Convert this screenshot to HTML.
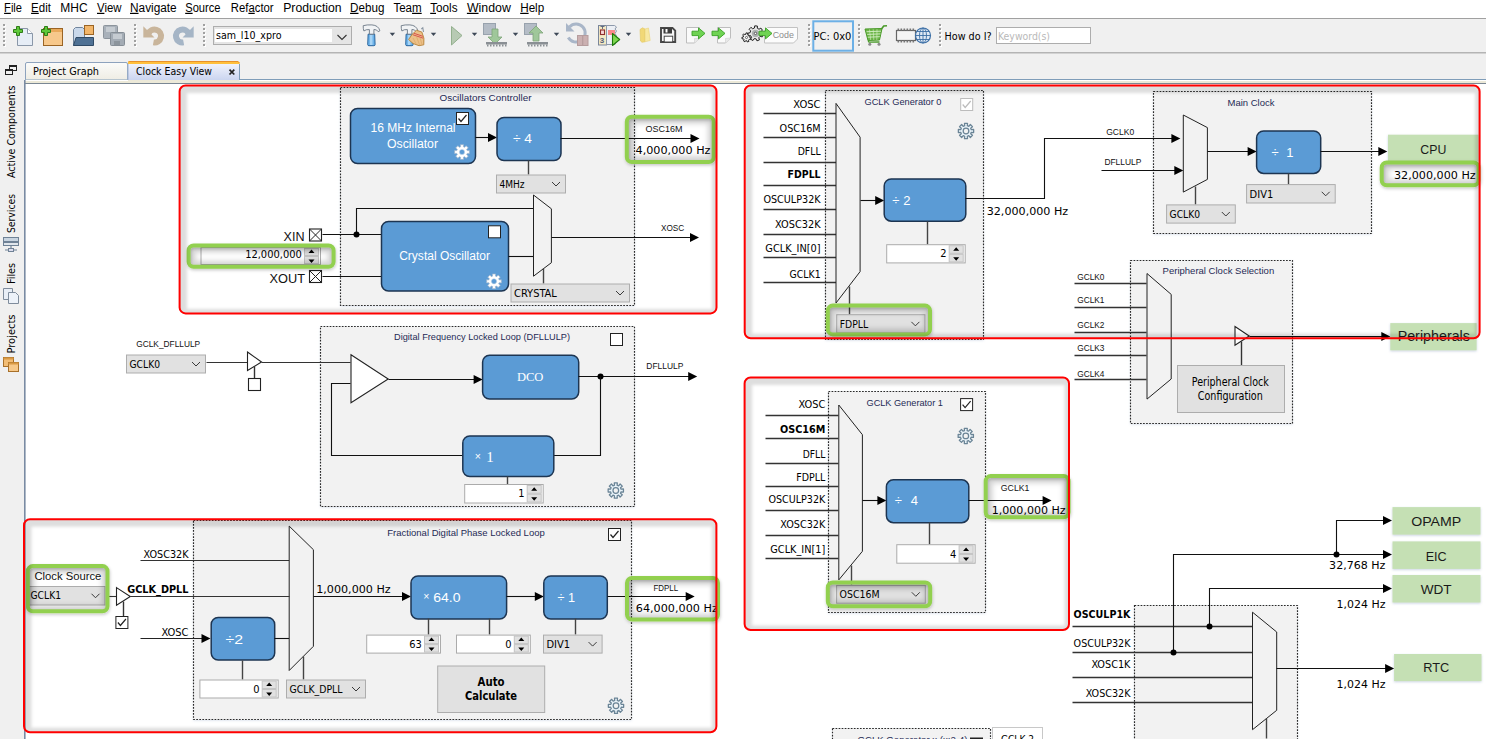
<!DOCTYPE html>
<html lang="en"><head><meta charset="utf-8"><title>Clock Easy View</title>
<style>
html,body{margin:0;padding:0;background:#fff;overflow:hidden}
svg{display:block}
text{white-space:pre}
</style></head>
<body>
<svg width="1486" height="739" viewBox="0 0 1486 739">
<defs>
<filter id="bs" x="-5%" y="-5%" width="110%" height="112%"><feDropShadow dx="0" dy="1" stdDeviation="1" flood-color="#6080b0" flood-opacity="0.25"/></filter>
<filter id="gs" x="-10%" y="-20%" width="120%" height="150%"><feDropShadow dx="0.5" dy="1.5" stdDeviation="1.6" flood-color="#000" flood-opacity="0.22"/></filter>
<filter id="ls" x="-5%" y="-10%" width="110%" height="130%"><feDropShadow dx="0" dy="1" stdDeviation="1" flood-color="#5070a0" flood-opacity="0.3"/></filter>
<filter id="gb" x="-10%" y="-20%" width="120%" height="140%"><feGaussianBlur stdDeviation="2.4"/></filter>
<filter id="rb" x="-5%" y="-5%" width="110%" height="110%"><feGaussianBlur stdDeviation="1.8"/></filter>
<linearGradient id="tabsel" x1="0" y1="0" x2="0" y2="1"><stop offset="0" stop-color="#f0f2fc"/><stop offset="1" stop-color="#cbd5f0"/></linearGradient>
<linearGradient id="tabun" x1="0" y1="0" x2="0" y2="1"><stop offset="0" stop-color="#fbfbfa"/><stop offset="1" stop-color="#efede4"/></linearGradient>
</defs>
<rect x="0" y="0" width="1486" height="739" fill="#fff"/>
<rect x="0" y="0" width="1486" height="18" fill="#fff"/>
<text x="4.1" y="11.8" font-size="12" font-family="'Liberation Sans',sans-serif" fill="#000" textLength="17.9" lengthAdjust="spacingAndGlyphs"><tspan text-decoration="underline">F</tspan>ile</text>
<text x="31.1" y="11.8" font-size="12" font-family="'Liberation Sans',sans-serif" fill="#000" textLength="19.8" lengthAdjust="spacingAndGlyphs"><tspan text-decoration="underline">E</tspan>dit</text>
<text x="60.3" y="11.8" font-size="12" font-family="'Liberation Sans',sans-serif" fill="#000" textLength="27.3" lengthAdjust="spacingAndGlyphs">MHC</text>
<text x="97" y="11.8" font-size="12" font-family="'Liberation Sans',sans-serif" fill="#000" textLength="24.5" lengthAdjust="spacingAndGlyphs"><tspan text-decoration="underline">V</tspan>iew</text>
<text x="130" y="11.8" font-size="12" font-family="'Liberation Sans',sans-serif" fill="#000" textLength="46.7" lengthAdjust="spacingAndGlyphs"><tspan text-decoration="underline">N</tspan>avigate</text>
<text x="185.2" y="11.8" font-size="12" font-family="'Liberation Sans',sans-serif" fill="#000" textLength="35.3" lengthAdjust="spacingAndGlyphs"><tspan text-decoration="underline">S</tspan>ource</text>
<text x="230.8" y="11.8" font-size="12" font-family="'Liberation Sans',sans-serif" fill="#000" textLength="42.8" lengthAdjust="spacingAndGlyphs">Ref<tspan text-decoration="underline">a</tspan>ctor</text>
<text x="283.2" y="11.8" font-size="12" font-family="'Liberation Sans',sans-serif" fill="#000" textLength="58.4" lengthAdjust="spacingAndGlyphs">Production</text>
<text x="350.1" y="11.8" font-size="12" font-family="'Liberation Sans',sans-serif" fill="#000" textLength="34.3" lengthAdjust="spacingAndGlyphs"><tspan text-decoration="underline">D</tspan>ebug</text>
<text x="393.4" y="11.8" font-size="12" font-family="'Liberation Sans',sans-serif" fill="#000" textLength="28.3" lengthAdjust="spacingAndGlyphs">Tea<tspan text-decoration="underline">m</tspan></text>
<text x="430.2" y="11.8" font-size="12" font-family="'Liberation Sans',sans-serif" fill="#000" textLength="27.3" lengthAdjust="spacingAndGlyphs"><tspan text-decoration="underline">T</tspan>ools</text>
<text x="466.9" y="11.8" font-size="12" font-family="'Liberation Sans',sans-serif" fill="#000" textLength="43.9" lengthAdjust="spacingAndGlyphs"><tspan text-decoration="underline">W</tspan>indow</text>
<text x="520.2" y="11.8" font-size="12" font-family="'Liberation Sans',sans-serif" fill="#000" textLength="24" lengthAdjust="spacingAndGlyphs"><tspan text-decoration="underline">H</tspan>elp</text>
<rect x="0" y="18" width="1486" height="36" fill="#f0f0f0"/>
<rect x="0" y="18" width="1486" height="1" fill="#a0a0a0"/>
<rect x="0" y="52" width="1486" height="1.5" fill="#b4b4b4"/>
<rect x="0" y="54" width="1486" height="30" fill="#f0f0f0"/>
<rect x="0" y="54" width="25" height="685" fill="#f0f0f0"/>
<rect x="25" y="79" width="1461" height="1" fill="#7f9db9"/>
<rect x="25" y="80" width="1461" height="1" fill="#fff"/>
<rect x="25" y="81" width="1461" height="2" fill="#ece9d8"/>
<rect x="24" y="83" width="1462" height="1" fill="#7a8794"/>
<rect x="24" y="80" width="1.6" height="659" fill="#7a8ba3"/>
<path d="M25.5 79.5 L25.5 64 Q25.5 62.5 27 62.5 L126 62.5 Q127.5 62.5 127.5 64 L127.5 79.5" fill="url(#tabun)" stroke="#8da2bd" stroke-width="1"/>
<text x="33" y="75" font-size="11" font-family="'DejaVu Sans Condensed','Liberation Sans',sans-serif" fill="#000" textLength="66" lengthAdjust="spacingAndGlyphs">Project Graph</text>
<rect x="128" y="64" width="111.5" height="16" fill="url(#tabsel)"/>
<rect x="128" y="80" width="111.5" height="3" fill="#ece9d8"/>
<path d="M128 64 L128 62.5 Q128 61 129.5 61 L238 61 L239.7 63 L239.7 64 Z" fill="#ffc03d"/>
<path d="M128.5 62 Q128.5 61.5 129.5 61.5 L238 61.5 L239.5 63" fill="none" stroke="#e8912d" stroke-width="1"/>
<rect x="239" y="64" width="1" height="16" fill="#7f9db9"/>
<rect x="127.5" y="64" width="1" height="16" fill="#9fb2cf"/>
<text x="136" y="75" font-size="11" font-family="'DejaVu Sans Condensed','Liberation Sans',sans-serif" fill="#000" textLength="76" lengthAdjust="spacingAndGlyphs">Clock Easy View</text>
<path d="M229.5 69.700 L234.300 74.500 M234.300 69.700 L229.500 74.500" stroke="#222" stroke-width="1.7" fill="none"/>
<rect x="9.5" y="65.5" width="7" height="5" fill="#f0f0f0" stroke="#222" stroke-width="1"/><rect x="9" y="65" width="8" height="2" fill="#222"/>
<rect x="5.5" y="69.5" width="7" height="5" fill="#f0f0f0" stroke="#222" stroke-width="1"/><rect x="5" y="69" width="8" height="2" fill="#222"/>
<text x="0" y="0" font-size="11" font-family="'DejaVu Sans Condensed','Liberation Sans',sans-serif" fill="#000" textLength="92.5" lengthAdjust="spacingAndGlyphs" transform="translate(15.2 178) rotate(-90)">Active Components</text>
<text x="0" y="0" font-size="11" font-family="'DejaVu Sans Condensed','Liberation Sans',sans-serif" fill="#000" textLength="39" lengthAdjust="spacingAndGlyphs" transform="translate(15.2 233) rotate(-90)">Services</text>
<text x="0" y="0" font-size="11" font-family="'DejaVu Sans Condensed','Liberation Sans',sans-serif" fill="#000" textLength="21" lengthAdjust="spacingAndGlyphs" transform="translate(15.2 284) rotate(-90)">Files</text>
<text x="0" y="0" font-size="11" font-family="'DejaVu Sans Condensed','Liberation Sans',sans-serif" fill="#000" textLength="39" lengthAdjust="spacingAndGlyphs" transform="translate(15.2 353.5) rotate(-90)">Projects</text>
<rect x="3.5" y="237.5" width="15" height="4" fill="#c8d4e0" stroke="#6f8296" stroke-width="1"/>
<rect x="3.5" y="242.5" width="15" height="3" fill="#e0e6ec" stroke="#6f8296" stroke-width="1"/>
<path d="M11 246 L11 250 M5 250 L17 250" stroke="#6f8296" stroke-width="1.2" fill="none"/><rect x="8.5" y="248.5" width="5" height="3" fill="#dde" stroke="#6f8296" stroke-width="1"/>
<path d="M3.500 288.5 L12.5 288.5 L12.5 299.5 L3.500 299.5 Z" fill="#e8eef6" stroke="#7f8c9c" stroke-width="1"/>
<path d="M8.5 292.5 L15.5 292.5 L18.5 295.5 L18.5 303.5 L8.5 303.5 Z" fill="#edf2f9" stroke="#7f8c9c" stroke-width="1"/>
<rect x="3.5" y="357.5" width="10" height="9" fill="#f2bd75" stroke="#a8702a" stroke-width="1"/>
<rect x="8.5" y="362.5" width="10" height="9" fill="#f7c98a" stroke="#a8702a" stroke-width="1"/>
<rect x="3.5" y="357.5" width="10" height="2" fill="#d99a45"/><rect x="8.5" y="362.5" width="10" height="2" fill="#d99a45"/>
<rect x="4" y="25" width="2" height="2" fill="#fff"/><rect x="3" y="24" width="2" height="2" fill="#a0a0a0"/>
<rect x="4" y="29" width="2" height="2" fill="#fff"/><rect x="3" y="28" width="2" height="2" fill="#a0a0a0"/>
<rect x="4" y="33" width="2" height="2" fill="#fff"/><rect x="3" y="32" width="2" height="2" fill="#a0a0a0"/>
<rect x="4" y="37" width="2" height="2" fill="#fff"/><rect x="3" y="36" width="2" height="2" fill="#a0a0a0"/>
<rect x="4" y="41" width="2" height="2" fill="#fff"/><rect x="3" y="40" width="2" height="2" fill="#a0a0a0"/>
<rect x="4" y="45" width="2" height="2" fill="#fff"/><rect x="3" y="44" width="2" height="2" fill="#a0a0a0"/>
<rect x="135" y="25" width="2" height="2" fill="#fff"/><rect x="134" y="24" width="2" height="2" fill="#a0a0a0"/>
<rect x="135" y="29" width="2" height="2" fill="#fff"/><rect x="134" y="28" width="2" height="2" fill="#a0a0a0"/>
<rect x="135" y="33" width="2" height="2" fill="#fff"/><rect x="134" y="32" width="2" height="2" fill="#a0a0a0"/>
<rect x="135" y="37" width="2" height="2" fill="#fff"/><rect x="134" y="36" width="2" height="2" fill="#a0a0a0"/>
<rect x="135" y="41" width="2" height="2" fill="#fff"/><rect x="134" y="40" width="2" height="2" fill="#a0a0a0"/>
<rect x="135" y="45" width="2" height="2" fill="#fff"/><rect x="134" y="44" width="2" height="2" fill="#a0a0a0"/>
<rect x="204" y="25" width="2" height="2" fill="#fff"/><rect x="203" y="24" width="2" height="2" fill="#a0a0a0"/>
<rect x="204" y="29" width="2" height="2" fill="#fff"/><rect x="203" y="28" width="2" height="2" fill="#a0a0a0"/>
<rect x="204" y="33" width="2" height="2" fill="#fff"/><rect x="203" y="32" width="2" height="2" fill="#a0a0a0"/>
<rect x="204" y="37" width="2" height="2" fill="#fff"/><rect x="203" y="36" width="2" height="2" fill="#a0a0a0"/>
<rect x="204" y="41" width="2" height="2" fill="#fff"/><rect x="203" y="40" width="2" height="2" fill="#a0a0a0"/>
<rect x="204" y="45" width="2" height="2" fill="#fff"/><rect x="203" y="44" width="2" height="2" fill="#a0a0a0"/>
<rect x="809" y="25" width="2" height="2" fill="#fff"/><rect x="808" y="24" width="2" height="2" fill="#a0a0a0"/>
<rect x="809" y="29" width="2" height="2" fill="#fff"/><rect x="808" y="28" width="2" height="2" fill="#a0a0a0"/>
<rect x="809" y="33" width="2" height="2" fill="#fff"/><rect x="808" y="32" width="2" height="2" fill="#a0a0a0"/>
<rect x="809" y="37" width="2" height="2" fill="#fff"/><rect x="808" y="36" width="2" height="2" fill="#a0a0a0"/>
<rect x="809" y="41" width="2" height="2" fill="#fff"/><rect x="808" y="40" width="2" height="2" fill="#a0a0a0"/>
<rect x="809" y="45" width="2" height="2" fill="#fff"/><rect x="808" y="44" width="2" height="2" fill="#a0a0a0"/>
<rect x="859" y="25" width="2" height="2" fill="#fff"/><rect x="858" y="24" width="2" height="2" fill="#a0a0a0"/>
<rect x="859" y="29" width="2" height="2" fill="#fff"/><rect x="858" y="28" width="2" height="2" fill="#a0a0a0"/>
<rect x="859" y="33" width="2" height="2" fill="#fff"/><rect x="858" y="32" width="2" height="2" fill="#a0a0a0"/>
<rect x="859" y="37" width="2" height="2" fill="#fff"/><rect x="858" y="36" width="2" height="2" fill="#a0a0a0"/>
<rect x="859" y="41" width="2" height="2" fill="#fff"/><rect x="858" y="40" width="2" height="2" fill="#a0a0a0"/>
<rect x="859" y="45" width="2" height="2" fill="#fff"/><rect x="858" y="44" width="2" height="2" fill="#a0a0a0"/>
<rect x="940" y="25" width="2" height="2" fill="#fff"/><rect x="939" y="24" width="2" height="2" fill="#a0a0a0"/>
<rect x="940" y="29" width="2" height="2" fill="#fff"/><rect x="939" y="28" width="2" height="2" fill="#a0a0a0"/>
<rect x="940" y="33" width="2" height="2" fill="#fff"/><rect x="939" y="32" width="2" height="2" fill="#a0a0a0"/>
<rect x="940" y="37" width="2" height="2" fill="#fff"/><rect x="939" y="36" width="2" height="2" fill="#a0a0a0"/>
<rect x="940" y="41" width="2" height="2" fill="#fff"/><rect x="939" y="40" width="2" height="2" fill="#a0a0a0"/>
<rect x="940" y="45" width="2" height="2" fill="#fff"/><rect x="939" y="44" width="2" height="2" fill="#a0a0a0"/>
<path d="M17.5 28.5 L27.5 28.5 L32.5 33.5 L32.5 45.5 L17.5 45.5 Z" fill="#e6edf6" stroke="#8a97a8" stroke-width="1"/><path d="M27.5 28.5 L27.5 33.5 L32.5 33.5" fill="#fff" stroke="#8a97a8" stroke-width="1"/>
<path d="M16.5 26.5 h3 v3 h3 v3 h-3 v3 h-3 v-3 h-3 v-3 h3 z" fill="#5fc93a" stroke="#2e7d16" stroke-width="1"/>
<rect x="43.500" y="28.5" width="19" height="17" fill="#f7c88b" stroke="#9a6424" stroke-width="1"/><rect x="44" y="29" width="18" height="3" fill="#e9a95a"/>
<path d="M44.5 26.5 h3 v3 h3 v3 h-3 v3 h-3 v-3 h-3 v-3 h3 z" fill="#5fc93a" stroke="#2e7d16" stroke-width="1"/>
<path d="M73.500 45.5 L73.500 29.5 L75.5 27.5 L82.5 27.5 L84.5 29.5 L84.5 45.5 Z" fill="#c9d8ea" stroke="#71859c" stroke-width="1"/>
<rect x="84.5" y="25.5" width="9" height="9" fill="#f2b66a" stroke="#9a6424" stroke-width="1"/>
<path d="M73.500 45.500 L76 37.5 L93.5 37.5 L93.5 45.5 Z" fill="#4f7194" stroke="#2f4a66" stroke-width="1"/>
<rect x="103.5" y="25.5" width="14" height="13" rx="1" fill="#a9b1ba" stroke="#8c949c" stroke-width="1"/><rect x="106" y="27" width="9" height="5" fill="#c5cbd1"/>
<rect x="110.5" y="32.5" width="14" height="13" rx="1" fill="#a3abb4" stroke="#868e96" stroke-width="1"/><rect x="113" y="34" width="9" height="5" fill="#c5cbd1"/><rect x="114" y="41" width="6" height="4" fill="#8c949c"/>
<path d="M148.400 33.800 A6.500 6.500 0 1 1 153.400 42.400" fill="none" stroke="#c9b59b" stroke-width="6"/><path d="M143.300 26.300 L143.300 37.500 L154.500 37.500 Z" fill="#c9b59b"/>
<path d="M188.600 33.800 A6.500 6.500 0 1 0 183.600 42.400" fill="none" stroke="#a5b5c6" stroke-width="6"/><path d="M193.700 26.300 L193.700 37.500 L182.500 37.500 Z" fill="#a5b5c6"/>
<rect x="213.500" y="26.5" width="138" height="18" fill="#e5e5e5" stroke="#adadad" stroke-width="1"/><rect x="215" y="29" width="117" height="13" fill="#fff"/>
<text x="216" y="38.8" font-size="11" font-family="'DejaVu Sans Condensed','Liberation Sans',sans-serif" fill="#000" textLength="65.5" lengthAdjust="spacingAndGlyphs">sam_l10_xpro</text>
<path d="M337.500 35 L342 39.500 L346.500 35" fill="none" stroke="#333" stroke-width="1.1"/>
<path d="M368.09999999999997 34.200 L374.7 34.200 L375.09999999999997 44.500 Q375.09999999999997 45.700 373.9 45.700 L368.9 45.700 Q367.7 45.700 367.7 44.500 Z" fill="#6db3ea" stroke="#1d5a94" stroke-width="0.9"/>
<rect x="369.9" y="35" width="2.600" height="10" fill="#b5dcf7" opacity="0.8"/>
<path d="M363.2 25.700 Q366.9 24.600 371.9 24.900 Q378.4 25.300 379.9 30.800 L378.2 31.700 Q376.9 29.300 373.9 29.500 L373.9 34.200 L369.4 34.200 L369.4 29.600 Q365.9 29.200 363.9 31 Q363.09999999999997 28.500 363.2 25.700 Z" fill="#f1f3f5" stroke="#6b7785" stroke-width="0.9" stroke-linejoin="round"/>
<path d="M389.7 32.8 L395.09999999999997 32.8 L392.4 36.1 Z" fill="#3d4857"/>
<path d="M406.09999999999997 34.200 L412.7 34.200 L413.09999999999997 44.500 Q413.09999999999997 45.700 411.9 45.700 L406.9 45.700 Q405.7 45.700 405.7 44.500 Z" fill="#6db3ea" stroke="#1d5a94" stroke-width="0.9"/>
<rect x="407.9" y="35" width="2.600" height="10" fill="#b5dcf7" opacity="0.8"/>
<path d="M401.2 25.700 Q404.9 24.600 409.9 24.900 Q416.4 25.300 417.9 30.800 L416.2 31.700 Q414.9 29.300 411.9 29.500 L411.9 34.200 L407.4 34.200 L407.4 29.600 Q403.9 29.200 401.9 31 Q401.09999999999997 28.500 401.2 25.700 Z" fill="#f1f3f5" stroke="#6b7785" stroke-width="0.9" stroke-linejoin="round"/>
<path d="M421.300 29 L422.800 27.800 L423.500 32" fill="none" stroke="#8a96a3" stroke-width="1.1"/>
<path d="M416.500 30.300 L421.800 32 Q425 38 423.800 44.800 L419 45.700 L413 43.500 L408.600 39.500 Q412 33.500 416.500 30.300 Z" fill="#ecc088" stroke="#b5823a" stroke-width="0.9" stroke-linejoin="round"/>
<path d="M414 33.300 L422.800 36.300 M413 34.800 L423.200 38.200" stroke="#d9534f" stroke-width="1"/><path d="M413 38 L416 43.800 M416.500 36.500 L419.500 44.800 M420 37.500 L422 44.500" stroke="#d9a866" stroke-width="0.7"/>
<path d="M430.8 32.8 L436.2 32.8 L433.5 36.1 Z" fill="#3d4857"/>
<path d="M451.500 26.500 L462 35.500 L451.500 45 Z" fill="#b7cab3" stroke="#93b08e" stroke-width="1"/>
<path d="M471.8 32.8 L477.2 32.8 L474.5 36.1 Z" fill="#3d4857"/>
<rect x="483.500" y="23.5" width="12" height="11" fill="#b4bcc6" stroke="#98a2ad" stroke-width="1"/>
<path d="M492 29 L498 29 L498 37 L502 37 L495 44 L488 37 L492 37 Z" fill="#9fc79a" stroke="#7da578" stroke-width="0.8"/>
<rect x="486" y="42" width="21" height="2.5" fill="#8a8f94"/>
<rect x="487" y="44.500" width="1.5" height="2" fill="#8a8f94"/>
<rect x="490" y="44.500" width="1.5" height="2" fill="#8a8f94"/>
<rect x="493" y="44.500" width="1.5" height="2" fill="#8a8f94"/>
<rect x="496" y="44.500" width="1.5" height="2" fill="#8a8f94"/>
<rect x="499" y="44.500" width="1.5" height="2" fill="#8a8f94"/>
<rect x="502" y="44.500" width="1.5" height="2" fill="#8a8f94"/>
<rect x="505" y="44.500" width="1.5" height="2" fill="#8a8f94"/>
<path d="M512.8 32.8 L518.2 32.8 L515.5 36.1 Z" fill="#3d4857"/>
<rect x="524.500" y="23.5" width="12" height="11" fill="#b4bcc6" stroke="#98a2ad" stroke-width="1"/>
<path d="M533 41 L539 41 L539 33 L543 33 L536 26 L529 33 L533 33 Z" fill="#9fc79a" stroke="#7da578" stroke-width="0.8"/>
<rect x="527" y="42" width="21" height="2.5" fill="#8a8f94"/>
<rect x="528" y="44.500" width="1.5" height="2" fill="#8a8f94"/>
<rect x="531" y="44.500" width="1.5" height="2" fill="#8a8f94"/>
<rect x="534" y="44.500" width="1.5" height="2" fill="#8a8f94"/>
<rect x="537" y="44.500" width="1.5" height="2" fill="#8a8f94"/>
<rect x="540" y="44.500" width="1.5" height="2" fill="#8a8f94"/>
<rect x="543" y="44.500" width="1.5" height="2" fill="#8a8f94"/>
<rect x="546" y="44.500" width="1.5" height="2" fill="#8a8f94"/>
<path d="M553.8 32.8 L559.2 32.8 L556.5 36.1 Z" fill="#3d4857"/>
<path d="M569.500 27 A9 9 0 1 1 568.300 37.500" fill="none" stroke="#a9b6c8" stroke-width="3"/><path d="M566 23 L566 31.500 L574.500 31.500 Z" fill="#a9b6c8"/>
<rect x="577.500" y="35.500" width="10.500" height="10" fill="#cbb0b1" stroke="#b59c9d" stroke-width="1"/><path d="M582.700 36 L582.700 45" stroke="#b59c9d" stroke-width="1.2"/>
<rect x="598.500" y="25.500" width="8" height="19.500" fill="#f3e8c3" stroke="#7a869a" stroke-width="1"/>
<path d="M600.500 26.500 L604.500 26.500 M602.500 26.500 L602.500 29" stroke="#55617a" stroke-width="0.9"/>
<rect x="600.500" y="30" width="4" height="4.500" fill="#f7d7d7" stroke="#8f2d2d" stroke-width="1.1"/>
<path d="M606.500 25.500 L614.500 25.500 L616.500 27 L615 29 L616.500 31 L615 33.500 L616.500 36 L615 38.500 L616.500 41 L615 44.500 L606.500 44.500 Z" fill="#eceff4" stroke="#8d99ab" stroke-width="1"/><rect x="608" y="30" width="7" height="5" fill="#f78b8b"/>
<text x="599.8" y="43" font-size="8" font-family="'Liberation Sans',sans-serif" fill="#55617a" font-weight="bold">3</text>
<path d="M612.500 33.500 L619.700 39.500 L612.500 45.500 Z" fill="#7dd64f" stroke="#1d7a0a" stroke-width="1.1" stroke-linejoin="round"/>
<path d="M625.8 32.8 L631.2 32.8 L628.5 36.1 Z" fill="#3d4857"/>
<path d="M640 29.500 L642.500 27.800 L645 29 L645 41.800 L642 42.300 L640.500 41 Z" fill="#f1d877" stroke="#e3c760" stroke-width="0.6"/><path d="M645 29 L648.500 28 L650.200 40.500 L645 41.800 Z" fill="#f7e8a2" stroke="#ead27a" stroke-width="0.6"/>
<path d="M661 28 L672.500 28 L675.200 30.700 L675.200 42 L661 42 Z" fill="#f5f5f5" stroke="#474747" stroke-width="1.9" stroke-linejoin="miter"/><rect x="663.500" y="28" width="8.500" height="5.500" fill="#3d3d3d"/><rect x="665.500" y="29" width="2" height="3.500" fill="#fff"/><rect x="664.200" y="36.200" width="8.500" height="5.800" fill="#fff" stroke="#474747" stroke-width="1"/>
<path d="M686.500 27.500 L699.500 27.500 L699.500 38 L694.500 43 L686.500 43 Z" fill="#fafafa" stroke="#bdbdbd" stroke-width="1"/><path d="M699.500 38 L694.500 38.500 L694.500 43" fill="#e8e8e8" stroke="#cfcfcf" stroke-width="0.6"/>
<path d="M692 31.2 L698.5 31.2 L698.5 27.9 L705 33.4 L698.5 38.9 L698.5 35.6 L692 35.6 Z" fill="#6fd353" stroke="#3aa024" stroke-width="0.9" stroke-linejoin="round"/>
<path d="M717.500 27.500 L730.500 27.500 L730.500 38 L725.500 43 L717.500 43 Z" fill="#fafafa" stroke="#bdbdbd" stroke-width="1"/><path d="M730.500 38 L725.500 38.500 L725.500 43" fill="#e8e8e8" stroke="#cfcfcf" stroke-width="0.6"/>
<path d="M712 31.2 L718.5 31.2 L718.5 27.9 L725 33.4 L718.5 38.9 L718.5 35.6 L712 35.6 Z" fill="#6fd353" stroke="#3aa024" stroke-width="0.9" stroke-linejoin="round"/>
<path d="M749.81 37.60 L751.07 38.05 L750.58 39.62 L749.29 39.29 L748.48 40.15 L748.92 41.42 L747.39 42.01 L746.84 40.79 L745.66 40.70 L744.94 41.83 L743.52 41.01 L744.14 39.82 L743.47 38.84 L742.15 38.98 L741.90 37.36 L743.21 37.10 L743.56 35.97 L742.63 35.02 L743.74 33.82 L744.76 34.68 L745.86 34.25 L746.02 32.92 L747.66 33.05 L747.62 34.38 L748.64 34.98 L749.78 34.27 L750.70 35.63 L749.64 36.43 Z" fill="#f4f4f4" stroke="#222" stroke-width="1" stroke-linejoin="round"/>
<circle cx="746.500" cy="37.500" r="1.1" fill="#fff" stroke="#333" stroke-width="0.7"/>
<path d="M760.97 33.57 L763.04 34.31 L762.24 36.91 L760.11 36.35 L758.78 37.78 L759.49 39.87 L756.96 40.86 L756.07 38.84 L754.12 38.69 L752.93 40.55 L750.58 39.19 L751.60 37.24 L750.50 35.62 L748.31 35.85 L747.90 33.17 L750.07 32.74 L750.65 30.88 L749.10 29.30 L750.95 27.32 L752.63 28.74 L754.45 28.03 L754.71 25.84 L757.42 26.05 L757.35 28.25 L759.04 29.23 L760.92 28.07 L762.45 30.31 L760.68 31.64 Z" fill="#e6e6e6" stroke="#222" stroke-width="1" stroke-linejoin="round"/>
<circle cx="755.500" cy="33.400" r="3.6" fill="#aeb2b2"/><circle cx="755.500" cy="33.400" r="1.2" fill="#fff" stroke="#333" stroke-width="0.7"/>
<path d="M764.500 30.500 L767.500 27.500 L797.500 27.500 L797.500 39 L793.500 43 L764.500 43 Z" fill="#fcfcfc" stroke="#c2c2c2" stroke-width="1"/>
<text x="772.7" y="38" font-size="9.4" font-family="'Liberation Sans',sans-serif" fill="#8c8c8c" textLength="21.3" lengthAdjust="spacingAndGlyphs">Code</text>
<path d="M759 31.2 L765.5 31.2 L765.5 27.9 L772 33.4 L765.5 38.9 L765.5 35.6 L759 35.6 Z" fill="#6fd353" stroke="#3aa024" stroke-width="0.9" stroke-linejoin="round"/>
<rect x="813.300" y="21.300" width="39.700" height="29.400" fill="#f0f0f0" stroke="#6cb0e6" stroke-width="2"/>
<text x="813.6" y="39.7" font-size="11" font-family="'DejaVu Sans Condensed','Liberation Sans',sans-serif" fill="#000" textLength="37.8" lengthAdjust="spacingAndGlyphs">PC: 0x0</text>
<path d="M865 29 L882 28.500 L879.500 40 L868 40.500 Z" fill="#6db648" stroke="#4a9a2a" stroke-width="1"/>
<path d="M866.500 31.700 L881 31.200 M867.200 34.400 L880.400 33.900 M867.900 37.200 L879.800 36.700" stroke="#d6efc8" stroke-width="0.9"/><path d="M869.500 29.500 L870.700 40 M873.200 29.300 L873.800 40 M877 29.200 L876.800 40" stroke="#d6efc8" stroke-width="0.6"/>
<path d="M881.500 29 L883.700 26 L887 25.700" fill="none" stroke="#4a9a2a" stroke-width="1.6"/><path d="M868 40.500 L869 42.200 L879.500 42" fill="none" stroke="#4a9a2a" stroke-width="1.3"/><circle cx="869.800" cy="44.200" r="1.5" fill="#8a8a8a"/><circle cx="879" cy="44.200" r="1.5" fill="#8a8a8a"/>
<rect x="896.500" y="30.5" width="19" height="10" fill="#f4f4f4" stroke="#666" stroke-width="1.2"/>
<rect x="897.5" y="28.500" width="1.6" height="2" fill="#777"/><rect x="897.5" y="40.500" width="1.6" height="2" fill="#777"/>
<rect x="900.5" y="28.500" width="1.6" height="2" fill="#777"/><rect x="900.5" y="40.500" width="1.6" height="2" fill="#777"/>
<rect x="903.5" y="28.500" width="1.6" height="2" fill="#777"/><rect x="903.5" y="40.500" width="1.6" height="2" fill="#777"/>
<rect x="906.5" y="28.500" width="1.6" height="2" fill="#777"/><rect x="906.5" y="40.500" width="1.6" height="2" fill="#777"/>
<rect x="909.5" y="28.500" width="1.6" height="2" fill="#777"/><rect x="909.5" y="40.500" width="1.6" height="2" fill="#777"/>
<rect x="912.5" y="28.500" width="1.6" height="2" fill="#777"/><rect x="912.5" y="40.500" width="1.6" height="2" fill="#777"/>
<circle cx="923" cy="35.500" r="7.5" fill="#dfe9f5" stroke="#3b6ea5" stroke-width="1.2"/><ellipse cx="923" cy="35.500" rx="3.5" ry="7.5" fill="none" stroke="#3b6ea5" stroke-width="0.9"/><path d="M915.500 35.500 L930.500 35.500 M923 28 L923 43 M917 31.500 L929 31.500 M917 39.500 L929 39.500" stroke="#3b6ea5" stroke-width="0.9"/>
<text x="944.6" y="39.7" font-size="11" font-family="'DejaVu Sans Condensed','Liberation Sans',sans-serif" fill="#000" textLength="47" lengthAdjust="spacingAndGlyphs">How do I?</text>
<rect x="996.500" y="27.500" width="94" height="16" fill="#fff" stroke="#adadad" stroke-width="1"/>
<text x="998" y="39.7" font-size="11" font-family="'DejaVu Sans Condensed','Liberation Sans',sans-serif" fill="#b9b9b9" textLength="52" lengthAdjust="spacingAndGlyphs">Keyword(s)</text>
<rect x="340.5" y="87.5" width="294.0" height="218.0" fill="#f2f2f2" stroke="none" filter="url(#bs)"/><rect x="340.5" y="87.5" width="294.0" height="218.0" fill="none" stroke="#2a2a2a" stroke-width="1.15" stroke-dasharray="1.7 1.35"/>
<text x="485.5" y="101" font-size="9.2" font-family="'Liberation Sans',sans-serif" fill="#1f2a55" text-anchor="middle" textLength="92" lengthAdjust="spacingAndGlyphs">Oscillators Controller</text>
<rect x="350.5" y="108.5" width="125.0" height="55.0" rx="7" fill="#5b9bd5" stroke="#1d3552" stroke-width="1.5"/>
<text x="413" y="132.3" font-size="12" font-family="'Liberation Sans',sans-serif" fill="#fff" text-anchor="middle" textLength="85" lengthAdjust="spacingAndGlyphs">16 MHz Internal</text>
<text x="412.5" y="148.3" font-size="12" font-family="'Liberation Sans',sans-serif" fill="#fff" text-anchor="middle" textLength="51" lengthAdjust="spacingAndGlyphs">Oscillator</text>
<rect x="456.5" y="112.5" width="12" height="12" fill="#fff" stroke="#222" stroke-width="1"/>
<path d="M458.5 118.5 L461 121.5 L466.5 115" fill="none" stroke="#222" stroke-width="1.2"/>
<path d="M467.22 150.62 L469.33 150.42 L469.33 153.58 L467.22 153.38 L466.67 154.71 L468.30 156.07 L466.07 158.30 L464.71 156.67 L463.38 157.22 L463.58 159.33 L460.42 159.33 L460.62 157.22 L459.29 156.67 L457.93 158.30 L455.70 156.07 L457.33 154.71 L456.78 153.38 L454.67 153.58 L454.67 150.42 L456.78 150.62 L457.33 149.29 L455.70 147.93 L457.93 145.70 L459.29 147.33 L460.62 146.78 L460.42 144.67 L463.58 144.67 L463.38 146.78 L464.71 147.33 L466.07 145.70 L468.30 147.93 L466.67 149.29 Z" fill="#fff" stroke="#9fb4cc" stroke-width="0.7" stroke-linejoin="round"/>
<circle cx="462" cy="152" r="2.62" fill="#5b9bd5" stroke="#c9d9ea" stroke-width="0.5"/>
<path d="M475.5 137.5 L490.5 137.5" fill="none" stroke="#111" stroke-width="1.1"/>
<path d="M497 137.5 L488 133.1 L488 141.9 Z" fill="#000"/>
<rect x="497" y="117.5" width="64" height="43.0" rx="7" fill="#5b9bd5" stroke="#1d3552" stroke-width="1.5"/>
<text x="513" y="142.5" font-size="13" font-family="'Liberation Sans',sans-serif" fill="#fff" textLength="19" lengthAdjust="spacingAndGlyphs">÷ 4</text>
<path d="M560.5 138.5 L692.5 138.5" fill="none" stroke="#111" stroke-width="1.1"/>
<path d="M699.5 138.5 L690.5 134.1 L690.5 142.9 Z" fill="#000"/>
<path d="M528.5 160.5 L528.5 174.5" fill="none" stroke="#444" stroke-width="1.4"/>
<rect x="496.5" y="175.0" width="69" height="18.0" fill="#e1e1e1" stroke="#adadad" stroke-width="1"/>
<text x="499.5" y="187.7" font-size="11" font-family="'DejaVu Sans Condensed','Liberation Sans',sans-serif" fill="#000" textLength="25.1" lengthAdjust="spacingAndGlyphs">4MHz</text>
<path d="M552 182.0 L556 186.0 L560 182.0" fill="none" stroke="#3a3a3a" stroke-width="1"/>
<text x="645.5" y="132" font-size="9" font-family="'Liberation Sans',sans-serif" fill="#111" textLength="37" lengthAdjust="spacingAndGlyphs">OSC16M</text>
<text x="635.5" y="153.5" font-size="11" font-family="'DejaVu Sans','Liberation Sans',sans-serif" fill="#000" textLength="75" lengthAdjust="spacingAndGlyphs">4,000,000 Hz</text>
<clipPath id="g1"><rect x="626.8" y="116.7" width="86.90000000000009" height="45.3" rx="5"/></clipPath>
<g clip-path="url(#g1)"><rect x="626.8" y="116.7" width="86.90000000000009" height="45.3" rx="5" fill="none" stroke="#000" stroke-opacity="0.16" stroke-width="13" filter="url(#gb)" transform="translate(0.6 0.6)"/></g>
<rect x="626.8" y="116.7" width="86.90000000000009" height="45.3" rx="5" fill="none" stroke="#92d050" stroke-width="4" filter="url(#gs)"/>
<path d="M322.5 234.5 L381.5 234.5" fill="none" stroke="#111" stroke-width="1.1"/>
<path d="M356.5 234.5 L356.5 208.5 L533.5 208.5" fill="none" stroke="#111" stroke-width="1.1"/>
<circle cx="356.5" cy="234.5" r="3" fill="#000"/>
<path d="M322.5 276.5 L381.5 276.5" fill="none" stroke="#111" stroke-width="1.1"/>
<rect x="381.5" y="221.5" width="127.0" height="69.5" rx="7" fill="#5b9bd5" stroke="#1d3552" stroke-width="1.5"/>
<text x="444.6" y="259.7" font-size="12" font-family="'Liberation Sans',sans-serif" fill="#fff" text-anchor="middle" textLength="90.8" lengthAdjust="spacingAndGlyphs">Crystal Oscillator</text>
<rect x="488.5" y="225.8" width="12" height="12" fill="#fff" stroke="#222" stroke-width="1"/>
<path d="M499.22 279.92 L501.33 279.72 L501.33 282.88 L499.22 282.68 L498.67 284.01 L500.30 285.37 L498.07 287.60 L496.71 285.97 L495.38 286.52 L495.58 288.63 L492.42 288.63 L492.62 286.52 L491.29 285.97 L489.93 287.60 L487.70 285.37 L489.33 284.01 L488.78 282.68 L486.67 282.88 L486.67 279.72 L488.78 279.92 L489.33 278.59 L487.70 277.23 L489.93 275.00 L491.29 276.63 L492.62 276.08 L492.42 273.97 L495.58 273.97 L495.38 276.08 L496.71 276.63 L498.07 275.00 L500.30 277.23 L498.67 278.59 Z" fill="#fff" stroke="#9fb4cc" stroke-width="0.7" stroke-linejoin="round"/>
<circle cx="494" cy="281.3" r="2.62" fill="#5b9bd5" stroke="#c9d9ea" stroke-width="0.5"/>
<path d="M508.5 256.5 L533.5 256.5" fill="none" stroke="#111" stroke-width="1.1"/>
<path d="M533.5 195 L551.4 208.8 L551.4 262.7 L533.5 276.2 Z" fill="#f2f2f2" stroke="#222" stroke-width="1"/>
<path d="M551.5 237.5 L692.5 237.5" fill="none" stroke="#111" stroke-width="1.1"/>
<path d="M699 237.5 L690 233.1 L690 241.9 Z" fill="#000"/>
<path d="M543.5 268.5 L543.5 283.5" fill="none" stroke="#444" stroke-width="1.4"/>
<rect x="511.0" y="284.0" width="118.5" height="18.0" fill="#e1e1e1" stroke="#adadad" stroke-width="1"/>
<text x="514.0" y="296.7" font-size="11" font-family="'DejaVu Sans Condensed','Liberation Sans',sans-serif" fill="#000">CRYSTAL</text>
<path d="M616 291.0 L620 295.0 L624 291.0" fill="none" stroke="#3a3a3a" stroke-width="1"/>
<text x="661" y="231" font-size="9" font-family="'Liberation Sans',sans-serif" fill="#111" textLength="23.3" lengthAdjust="spacingAndGlyphs">XOSC</text>
<rect x="309.5" y="229.0" width="12" height="12" fill="#fff" stroke="#222" stroke-width="1.1"/><path d="M309.5 229.0 L321.5 241.0 M321.5 229.0 L309.5 241.0" stroke="#222" stroke-width="1"/>
<rect x="309.5" y="270.5" width="12" height="12" fill="#fff" stroke="#222" stroke-width="1.1"/><path d="M309.5 270.5 L321.5 282.5 M321.5 270.5 L309.5 282.5" stroke="#222" stroke-width="1"/>
<text x="304.5" y="240.5" font-size="13" font-family="'Liberation Sans',sans-serif" fill="#111" text-anchor="end" textLength="21" lengthAdjust="spacingAndGlyphs">XIN</text>
<text x="305" y="282.5" font-size="13" font-family="'Liberation Sans',sans-serif" fill="#111" text-anchor="end" textLength="35.5" lengthAdjust="spacingAndGlyphs">XOUT</text>
<rect x="201.0" y="247.5" width="119.5" height="17" fill="#fff" stroke="#ababab" stroke-width="1"/>
<rect x="304.5" y="248.5" width="14" height="7.0" fill="#e1e1e1" stroke="#c4c4c4" stroke-width="1"/>
<rect x="304.5" y="256.5" width="14" height="7.0" fill="#e1e1e1" stroke="#c4c4c4" stroke-width="1"/>
<path d="M308.5 253.0 L311.5 249.5 L314.5 253.0 Z M308.5 259.5 L311.5 263.0 L314.5 259.5 Z" fill="#000"/>
<text x="301.8" y="258.4" font-size="11" font-family="'DejaVu Sans Condensed','Liberation Sans',sans-serif" fill="#000" text-anchor="end">12,000,000</text>
<clipPath id="g2"><rect x="188.6" y="245.5" width="145.00000000000003" height="21.19999999999999" rx="5"/></clipPath>
<g clip-path="url(#g2)"><rect x="188.6" y="245.5" width="145.00000000000003" height="21.19999999999999" rx="5" fill="none" stroke="#000" stroke-opacity="0.16" stroke-width="13" filter="url(#gb)" transform="translate(0.6 0.6)"/></g>
<rect x="188.6" y="245.5" width="145.00000000000003" height="21.19999999999999" rx="5" fill="none" stroke="#92d050" stroke-width="4" filter="url(#gs)"/>
<clipPath id="c1"><rect x="179.6" y="85.5" width="536.9" height="227.89999999999998" rx="6"/></clipPath>
<g clip-path="url(#c1)"><rect x="179.6" y="85.5" width="536.9" height="227.89999999999998" rx="6" fill="none" stroke="#000" stroke-opacity="0.13" stroke-width="12" filter="url(#rb)" transform="translate(1.5 1.5)"/></g>
<rect x="179.6" y="85.5" width="536.9" height="227.89999999999998" rx="6" fill="none" stroke="#ff0000" stroke-width="2"/>
<rect x="320.5" y="326.5" width="314.0" height="180.0" fill="#f2f2f2" stroke="none" filter="url(#bs)"/><rect x="320.5" y="326.5" width="314.0" height="180.0" fill="none" stroke="#2a2a2a" stroke-width="1.15" stroke-dasharray="1.7 1.35"/>
<text x="482" y="340.3" font-size="9.2" font-family="'Liberation Sans',sans-serif" fill="#1f2a55" text-anchor="middle" textLength="176" lengthAdjust="spacingAndGlyphs">Digital Frequency Locked Loop (DFLLULP)</text>
<text x="136.2" y="347" font-size="9" font-family="'Liberation Sans',sans-serif" fill="#111" textLength="64" lengthAdjust="spacingAndGlyphs">GCLK_DFLLULP</text>
<rect x="126.5" y="355.0" width="79" height="18.0" fill="#e1e1e1" stroke="#adadad" stroke-width="1"/>
<text x="129.5" y="367.7" font-size="11" font-family="'DejaVu Sans Condensed','Liberation Sans',sans-serif" fill="#000" textLength="30.5" lengthAdjust="spacingAndGlyphs">GCLK0</text>
<path d="M192 362.0 L196 366.0 L200 362.0" fill="none" stroke="#3a3a3a" stroke-width="1"/>
<path d="M206.5 362.5 L247.5 362.5" fill="none" stroke="#333" stroke-width="1.1"/>
<path d="M247.500 352 L261.500 362 L247.500 370.500 Z" fill="#fff" stroke="#222" stroke-width="1.1"/>
<path d="M254.5 366.5 L254.5 378.5" fill="none" stroke="#333" stroke-width="1.4"/>
<rect x="248.500" y="378.500" width="12" height="12" fill="#fff" stroke="#222" stroke-width="1.1"/>
<path d="M261.5 362.5 L350.5 362.5" fill="none" stroke="#333" stroke-width="1.1"/>
<path d="M351 354.700 L388.200 379 L351 402.800 Z" fill="#fff" stroke="#222" stroke-width="1.1"/>
<path d="M388.5 379.5 L474.5 379.5" fill="none" stroke="#111" stroke-width="1.1"/>
<path d="M482.6 379.5 L473.6 375.1 L473.6 383.9 Z" fill="#000"/>
<rect x="482.6" y="355.2" width="96.10000000000002" height="43.80000000000001" rx="7" fill="#5b9bd5" stroke="#1d3552" stroke-width="1.5"/>
<text x="530.2" y="380.9" font-size="13" font-family="'Liberation Serif',serif" fill="#fff" text-anchor="middle" textLength="26.5" lengthAdjust="spacingAndGlyphs">DCO</text>
<path d="M578.5 376.5 L690.5 376.5" fill="none" stroke="#111" stroke-width="1.1"/>
<path d="M697.2 376.5 L688.2 372.1 L688.2 380.9 Z" fill="#000"/>
<circle cx="600.5" cy="376.5" r="3" fill="#000"/>
<path d="M600.5 376.5 L600.5 455.5 L553.5 455.5" fill="none" stroke="#111" stroke-width="1.1"/>
<path d="M462.5 455.5 L331.5 455.5 L331.5 383.5 L350.5 383.5" fill="none" stroke="#111" stroke-width="1.1"/>
<rect x="462.8" y="436" width="90.99999999999994" height="40.5" rx="7" fill="#5b9bd5" stroke="#1d3552" stroke-width="1.5"/>
<text x="474.8" y="459.5" font-size="10.5" font-family="'Liberation Sans',sans-serif" fill="#fff">×</text>
<text x="486.2" y="461.6" font-size="15" font-family="'Liberation Serif',serif" fill="#fff">1</text>
<path d="M507.5 476.5 L507.5 484.5" fill="none" stroke="#444" stroke-width="1.4"/>
<rect x="464.7" y="484.5" width="78.50000000000006" height="18.5" fill="#fff" stroke="#ababab" stroke-width="1"/>
<rect x="527.2" y="485.5" width="14" height="7.75" fill="#e1e1e1" stroke="#c4c4c4" stroke-width="1"/>
<rect x="527.2" y="494.25" width="14" height="7.75" fill="#e1e1e1" stroke="#c4c4c4" stroke-width="1"/>
<path d="M531.2 490.75 L534.2 487.25 L537.2 490.75 Z M531.2 497.25 L534.2 500.75 L537.2 497.25 Z" fill="#000"/>
<text x="524.5" y="497.35" font-size="11" font-family="'DejaVu Sans Condensed','Liberation Sans',sans-serif" fill="#000" text-anchor="end">1</text>
<rect x="610.5" y="333.5" width="12" height="12" fill="#fff" stroke="#222" stroke-width="1"/>
<path d="M621.10 489.18 L623.45 488.98 L623.45 492.02 L621.10 491.82 L620.48 493.32 L622.29 494.83 L620.13 496.99 L618.62 495.18 L617.12 495.80 L617.32 498.15 L614.28 498.15 L614.48 495.80 L612.98 495.18 L611.47 496.99 L609.31 494.83 L611.12 493.32 L610.50 491.82 L608.15 492.02 L608.15 488.98 L610.50 489.18 L611.12 487.68 L609.31 486.17 L611.47 484.01 L612.98 485.82 L614.48 485.20 L614.28 482.85 L617.32 482.85 L617.12 485.20 L618.62 485.82 L620.13 484.01 L622.29 486.17 L620.48 487.68 Z" fill="#e9f3f9" stroke="#6a8496" stroke-width="1.25" stroke-linejoin="round"/>
<circle cx="615.8" cy="490.5" r="2.81" fill="#f2f2f2" stroke="#6a8496" stroke-width="1.25"/>
<text x="646.3" y="369.3" font-size="9" font-family="'Liberation Sans',sans-serif" fill="#111" textLength="37" lengthAdjust="spacingAndGlyphs">DFLLULP</text>
<rect x="193.5" y="520.5" width="438.0" height="199.0" fill="#f2f2f2" stroke="none" filter="url(#bs)"/><rect x="193.5" y="520.5" width="438.0" height="199.0" fill="none" stroke="#2a2a2a" stroke-width="1.15" stroke-dasharray="1.7 1.35"/>
<text x="466" y="535.6" font-size="9.2" font-family="'Liberation Sans',sans-serif" fill="#1f2a55" text-anchor="middle" textLength="157.5" lengthAdjust="spacingAndGlyphs">Fractional Digital Phase Locked Loop</text>
<rect x="608.5" y="528.5" width="12" height="12" fill="#fff" stroke="#222" stroke-width="1"/>
<path d="M610.5 534.5 L613 537.5 L618.5 531" fill="none" stroke="#222" stroke-width="1.2"/>
<path d="M621.30 704.48 L623.65 704.28 L623.65 707.32 L621.30 707.12 L620.68 708.62 L622.49 710.13 L620.33 712.29 L618.82 710.48 L617.32 711.10 L617.52 713.45 L614.48 713.45 L614.68 711.10 L613.18 710.48 L611.67 712.29 L609.51 710.13 L611.32 708.62 L610.70 707.12 L608.35 707.32 L608.35 704.28 L610.70 704.48 L611.32 702.98 L609.51 701.47 L611.67 699.31 L613.18 701.12 L614.68 700.50 L614.48 698.15 L617.52 698.15 L617.32 700.50 L618.82 701.12 L620.33 699.31 L622.49 701.47 L620.68 702.98 Z" fill="#e9f3f9" stroke="#6a8496" stroke-width="1.25" stroke-linejoin="round"/>
<circle cx="616" cy="705.8" r="2.81" fill="#f2f2f2" stroke="#6a8496" stroke-width="1.25"/>
<text x="188.5" y="558" font-size="11" font-family="'DejaVu Sans Condensed','Liberation Sans',sans-serif" fill="#000" text-anchor="end" textLength="45" lengthAdjust="spacingAndGlyphs">XOSC32K</text>
<path d="M140.5 560.5 L289.5 560.5" fill="none" stroke="#333" stroke-width="1.1"/>
<text x="188.5" y="593" font-size="11" font-family="'DejaVu Sans Condensed','Liberation Sans',sans-serif" fill="#000" text-anchor="end" font-weight="bold" textLength="61.3" lengthAdjust="spacingAndGlyphs">GCLK_DPLL</text>
<text x="188.5" y="635.5" font-size="11" font-family="'DejaVu Sans Condensed','Liberation Sans',sans-serif" fill="#000" text-anchor="end" textLength="27" lengthAdjust="spacingAndGlyphs">XOSC</text>
<path d="M140.5 638.5 L202.5 638.5" fill="none" stroke="#222" stroke-width="1.1"/>
<path d="M210.5 638.5 L201.5 634.1 L201.5 642.9 Z" fill="#000"/>
<rect x="211.2" y="617.5" width="63.5" height="42.5" rx="7" fill="#5b9bd5" stroke="#1d3552" stroke-width="1.5"/>
<text x="225.5" y="643.9" font-size="13.5" font-family="'Liberation Sans',sans-serif" fill="#fff" textLength="17.5" lengthAdjust="spacingAndGlyphs">÷2</text>
<path d="M274.5 638.5 L289.5 638.5" fill="none" stroke="#111" stroke-width="1.1"/>
<path d="M242.5 660.5 L242.5 679.5" fill="none" stroke="#444" stroke-width="1.4"/>
<rect x="199.9" y="680.0" width="78.29999999999998" height="18.0" fill="#fff" stroke="#ababab" stroke-width="1"/>
<rect x="262.2" y="681.0" width="14" height="7.5" fill="#e1e1e1" stroke="#c4c4c4" stroke-width="1"/>
<rect x="262.2" y="689.5" width="14" height="7.5" fill="#e1e1e1" stroke="#c4c4c4" stroke-width="1"/>
<path d="M266.2 686.0 L269.2 682.5 L272.2 686.0 Z M266.2 692.5 L269.2 696.0 L272.2 692.5 Z" fill="#000"/>
<text x="259.5" y="692.6" font-size="11" font-family="'DejaVu Sans Condensed','Liberation Sans',sans-serif" fill="#000" text-anchor="end">0</text>
<path d="M289.2 526.1 L313.4 549.7 L313.4 646.3 L289.2 670.5 Z" fill="#f2f2f2" stroke="#222" stroke-width="1"/>
<path d="M303.5 656.5 L303.5 679.5" fill="none" stroke="#444" stroke-width="1.4"/>
<rect x="286.5" y="680.0" width="79" height="18.0" fill="#e1e1e1" stroke="#adadad" stroke-width="1"/>
<text x="289.5" y="692.7" font-size="11" font-family="'DejaVu Sans Condensed','Liberation Sans',sans-serif" fill="#000" textLength="53" lengthAdjust="spacingAndGlyphs">GCLK_DPLL</text>
<path d="M352 687.0 L356 691.0 L360 687.0" fill="none" stroke="#3a3a3a" stroke-width="1"/>
<text x="34.4" y="580" font-size="11.5" font-family="'Liberation Sans',sans-serif" fill="#111" textLength="67" lengthAdjust="spacingAndGlyphs">Clock Source</text>
<rect x="27.5" y="586.5" width="77.5" height="18.5" fill="#e1e1e1" stroke="#adadad" stroke-width="1"/>
<text x="30.5" y="599.45" font-size="11" font-family="'DejaVu Sans Condensed','Liberation Sans',sans-serif" fill="#000" textLength="30.5" lengthAdjust="spacingAndGlyphs">GCLK1</text>
<path d="M91.5 593.75 L95.5 597.75 L99.5 593.75" fill="none" stroke="#3a3a3a" stroke-width="1"/>
<path d="M106.5 596.5 L117.5 596.5" fill="none" stroke="#333" stroke-width="1.1"/>
<path d="M116.500 587.600 L130.300 596.500 L116.500 605.200 Z" fill="#fff" stroke="#222" stroke-width="1.1"/>
<path d="M123.5 601.5 L123.5 616.5" fill="none" stroke="#333" stroke-width="1.4"/>
<rect x="115.9" y="616.5" width="12" height="12" fill="#fff" stroke="#222" stroke-width="1"/>
<path d="M117.9 622.5 L120.4 625.5 L125.9 619" fill="none" stroke="#222" stroke-width="1.2"/>
<path d="M130.5 596.5 L289.5 596.5" fill="none" stroke="#333" stroke-width="1.1"/>
<clipPath id="g3"><rect x="27.8" y="566.1" width="79.7" height="45.10000000000002" rx="5"/></clipPath>
<g clip-path="url(#g3)"><rect x="27.8" y="566.1" width="79.7" height="45.10000000000002" rx="5" fill="none" stroke="#000" stroke-opacity="0.16" stroke-width="13" filter="url(#gb)" transform="translate(0.6 0.6)"/></g>
<rect x="27.8" y="566.1" width="79.7" height="45.10000000000002" rx="5" fill="none" stroke="#92d050" stroke-width="4" filter="url(#gs)"/>
<path d="M313.5 596.5 L404.5 596.5" fill="none" stroke="#111" stroke-width="1.1"/>
<path d="M411 596.5 L402 592.1 L402 600.9 Z" fill="#000"/>
<text x="316.2" y="593.3" font-size="11" font-family="'DejaVu Sans','Liberation Sans',sans-serif" fill="#000" textLength="74.5" lengthAdjust="spacingAndGlyphs">1,000,000 Hz</text>
<rect x="411" y="576" width="95.60000000000002" height="43" rx="7" fill="#5b9bd5" stroke="#1d3552" stroke-width="1.5"/>
<text x="423.3" y="600.2" font-size="10.5" font-family="'Liberation Sans',sans-serif" fill="#fff">×</text>
<text x="433.2" y="602.3" font-size="13" font-family="'Liberation Sans',sans-serif" fill="#fff" textLength="27.3" lengthAdjust="spacingAndGlyphs">64.0</text>
<path d="M506.5 596.5 L536.5 596.5" fill="none" stroke="#111" stroke-width="1.1"/>
<path d="M543.8 596.5 L534.8 592.1 L534.8 600.9 Z" fill="#000"/>
<rect x="543.8" y="576" width="63.5" height="43" rx="7" fill="#5b9bd5" stroke="#1d3552" stroke-width="1.5"/>
<text x="557.5" y="602" font-size="13" font-family="'Liberation Sans',sans-serif" fill="#fff" textLength="17.5" lengthAdjust="spacingAndGlyphs">÷ 1</text>
<path d="M607.5 596.5 L686.5 596.5" fill="none" stroke="#111" stroke-width="1.1"/>
<path d="M694.7 596.5 L685.7 592.1 L685.7 600.9 Z" fill="#000"/>
<path d="M428.5 618.5 L428.5 634.5" fill="none" stroke="#444" stroke-width="1.4"/>
<path d="M489.5 618.5 L489.5 634.5" fill="none" stroke="#444" stroke-width="1.4"/>
<path d="M575.5 618.5 L575.5 634.5" fill="none" stroke="#444" stroke-width="1.4"/>
<rect x="366.7" y="635.1" width="73.80000000000001" height="18.0" fill="#fff" stroke="#ababab" stroke-width="1"/>
<rect x="424.5" y="636.1" width="14" height="7.5" fill="#e1e1e1" stroke="#c4c4c4" stroke-width="1"/>
<rect x="424.5" y="644.6" width="14" height="7.5" fill="#e1e1e1" stroke="#c4c4c4" stroke-width="1"/>
<path d="M428.5 641.1 L431.5 637.6 L434.5 641.1 Z M428.5 647.6 L431.5 651.1 L434.5 647.6 Z" fill="#000"/>
<text x="421.8" y="647.7" font-size="11" font-family="'DejaVu Sans Condensed','Liberation Sans',sans-serif" fill="#000" text-anchor="end">63</text>
<rect x="456.5" y="635.1" width="73.79999999999995" height="18.0" fill="#fff" stroke="#ababab" stroke-width="1"/>
<rect x="514.3" y="636.1" width="14" height="7.5" fill="#e1e1e1" stroke="#c4c4c4" stroke-width="1"/>
<rect x="514.3" y="644.6" width="14" height="7.5" fill="#e1e1e1" stroke="#c4c4c4" stroke-width="1"/>
<path d="M518.3 641.1 L521.3 637.6 L524.3 641.1 Z M518.3 647.6 L521.3 651.1 L524.3 647.6 Z" fill="#000"/>
<text x="511.59999999999997" y="647.7" font-size="11" font-family="'DejaVu Sans Condensed','Liberation Sans',sans-serif" fill="#000" text-anchor="end">0</text>
<rect x="543.5" y="635.1" width="58.60000000000002" height="18.0" fill="#e1e1e1" stroke="#adadad" stroke-width="1"/>
<text x="546.5" y="647.8000000000001" font-size="11" font-family="'DejaVu Sans Condensed','Liberation Sans',sans-serif" fill="#000">DIV1</text>
<path d="M588.6 642.1 L592.6 646.1 L596.6 642.1" fill="none" stroke="#3a3a3a" stroke-width="1"/>
<rect x="437.700" y="666" width="107" height="46.500" fill="#e1e1e1" stroke="#adadad" stroke-width="1"/>
<text x="491" y="685.7" font-size="11.5" font-family="'DejaVu Sans Condensed','Liberation Sans',sans-serif" fill="#000" text-anchor="middle" font-weight="bold" textLength="27" lengthAdjust="spacingAndGlyphs">Auto</text>
<text x="491" y="699.6" font-size="11.5" font-family="'DejaVu Sans Condensed','Liberation Sans',sans-serif" fill="#000" text-anchor="middle" font-weight="bold" textLength="52" lengthAdjust="spacingAndGlyphs">Calculate</text>
<text x="653.5" y="590.6" font-size="9" font-family="'Liberation Sans',sans-serif" fill="#111" textLength="24.7" lengthAdjust="spacingAndGlyphs">FDPLL</text>
<clipPath id="cf"><rect x="0" y="500" width="716.500" height="239"/></clipPath>
<g clip-path="url(#cf)">
<text x="635.8" y="611.6" font-size="11" font-family="'DejaVu Sans','Liberation Sans',sans-serif" fill="#000" textLength="82" lengthAdjust="spacingAndGlyphs">64,000,000 Hz</text>
</g>
<clipPath id="g4"><rect x="627" y="578" width="91" height="41.60000000000002" rx="5"/></clipPath>
<g clip-path="url(#g4)"><rect x="627" y="578" width="91" height="41.60000000000002" rx="5" fill="none" stroke="#000" stroke-opacity="0.16" stroke-width="13" filter="url(#gb)" transform="translate(0.6 0.6)"/></g>
<rect x="627" y="578" width="91" height="41.60000000000002" rx="5" fill="none" stroke="#92d050" stroke-width="4" filter="url(#gs)"/>
<clipPath id="c3"><rect x="24" y="519.3" width="692.4" height="212.9000000000001" rx="6"/></clipPath>
<g clip-path="url(#c3)"><rect x="24" y="519.3" width="692.4" height="212.9000000000001" rx="6" fill="none" stroke="#000" stroke-opacity="0.13" stroke-width="12" filter="url(#rb)" transform="translate(1.5 1.5)"/></g>
<rect x="24" y="519.3" width="692.4" height="212.9000000000001" rx="6" fill="none" stroke="#ff0000" stroke-width="2"/>
<rect x="825.5" y="90.5" width="158.0" height="249.0" fill="#f2f2f2" stroke="none" filter="url(#bs)"/><rect x="825.5" y="90.5" width="158.0" height="249.0" fill="none" stroke="#2a2a2a" stroke-width="1.15" stroke-dasharray="1.7 1.35"/>
<text x="903" y="105.2" font-size="9.2" font-family="'Liberation Sans',sans-serif" fill="#1f2a55" text-anchor="middle" textLength="77" lengthAdjust="spacingAndGlyphs">GCLK Generator 0</text>
<rect x="960.7" y="98.5" width="12" height="12" fill="#fff" stroke="#bcbcbc" stroke-width="1"/>
<path d="M962.7 104.5 L965.2 107.5 L970.7 101" fill="none" stroke="#bcbcbc" stroke-width="1.2"/>
<path d="M971.30 129.68 L973.65 129.48 L973.65 132.52 L971.30 132.32 L970.68 133.82 L972.49 135.33 L970.33 137.49 L968.82 135.68 L967.32 136.30 L967.52 138.65 L964.48 138.65 L964.68 136.30 L963.18 135.68 L961.67 137.49 L959.51 135.33 L961.32 133.82 L960.70 132.32 L958.35 132.52 L958.35 129.48 L960.70 129.68 L961.32 128.18 L959.51 126.67 L961.67 124.51 L963.18 126.32 L964.68 125.70 L964.48 123.35 L967.52 123.35 L967.32 125.70 L968.82 126.32 L970.33 124.51 L972.49 126.67 L970.68 128.18 Z" fill="#e9f3f9" stroke="#6a8496" stroke-width="1.25" stroke-linejoin="round"/>
<circle cx="966" cy="131" r="2.81" fill="#f2f2f2" stroke="#6a8496" stroke-width="1.25"/>
<text x="820.6" y="107.8" font-size="11" font-family="'DejaVu Sans Condensed','Liberation Sans',sans-serif" fill="#000" text-anchor="end" textLength="27.3" lengthAdjust="spacingAndGlyphs">XOSC</text>
<path d="M763.5 113.5 L836.5 113.5" fill="none" stroke="#333" stroke-width="1.3"/>
<text x="820.6" y="131.9" font-size="11" font-family="'DejaVu Sans Condensed','Liberation Sans',sans-serif" fill="#000" text-anchor="end" textLength="41" lengthAdjust="spacingAndGlyphs">OSC16M</text>
<path d="M763.5 137.5 L836.5 137.5" fill="none" stroke="#333" stroke-width="1.3"/>
<text x="820.6" y="154.8" font-size="11" font-family="'DejaVu Sans Condensed','Liberation Sans',sans-serif" fill="#000" text-anchor="end" textLength="22.9" lengthAdjust="spacingAndGlyphs">DFLL</text>
<path d="M763.5 162.5 L836.5 162.5" fill="none" stroke="#333" stroke-width="1.3"/>
<text x="820.6" y="177.6" font-size="11" font-family="'DejaVu Sans Condensed','Liberation Sans',sans-serif" fill="#000" text-anchor="end" font-weight="bold" textLength="33" lengthAdjust="spacingAndGlyphs">FDPLL</text>
<path d="M763.5 185.5 L836.5 185.5" fill="none" stroke="#333" stroke-width="1.3"/>
<text x="820.6" y="202.6" font-size="11" font-family="'DejaVu Sans Condensed','Liberation Sans',sans-serif" fill="#000" text-anchor="end" textLength="57.2" lengthAdjust="spacingAndGlyphs">OSCULP32K</text>
<path d="M763.5 209.5 L836.5 209.5" fill="none" stroke="#333" stroke-width="1.3"/>
<text x="820.6" y="227.5" font-size="11" font-family="'DejaVu Sans Condensed','Liberation Sans',sans-serif" fill="#000" text-anchor="end" textLength="45.5" lengthAdjust="spacingAndGlyphs">XOSC32K</text>
<path d="M763.5 234.5 L836.5 234.5" fill="none" stroke="#333" stroke-width="1.3"/>
<text x="820.6" y="252" font-size="11" font-family="'DejaVu Sans Condensed','Liberation Sans',sans-serif" fill="#000" text-anchor="end" textLength="55.3" lengthAdjust="spacingAndGlyphs">GCLK_IN[0]</text>
<path d="M763.5 257.5 L836.5 257.5" fill="none" stroke="#333" stroke-width="1.3"/>
<text x="820.6" y="277.5" font-size="11" font-family="'DejaVu Sans Condensed','Liberation Sans',sans-serif" fill="#000" text-anchor="end" textLength="31" lengthAdjust="spacingAndGlyphs">GCLK1</text>
<path d="M763.5 282.5 L836.5 282.5" fill="none" stroke="#333" stroke-width="1.3"/>
<path d="M836 103.4 L860.1 137.2 L860.1 271.6 L836 303 Z" fill="#f2f2f2" stroke="#222" stroke-width="1"/>
<path d="M860.5 200.5 L876.5 200.5" fill="none" stroke="#111" stroke-width="1.1"/>
<path d="M884.2 200.5 L875.2 196.1 L875.2 204.9 Z" fill="#000"/>
<rect x="884.2" y="179" width="81.59999999999991" height="42.19999999999999" rx="7" fill="#5b9bd5" stroke="#1d3552" stroke-width="1.5"/>
<text x="892.3" y="205.4" font-size="13" font-family="'Liberation Sans',sans-serif" fill="#fff">÷</text>
<text x="903.2" y="205.4" font-size="13" font-family="'Liberation Sans',sans-serif" fill="#fff">2</text>
<path d="M927.5 221.5 L927.5 244.5" fill="none" stroke="#444" stroke-width="1.4"/>
<rect x="886.7" y="244.7" width="78.5" height="18.19999999999999" fill="#fff" stroke="#ababab" stroke-width="1"/>
<rect x="949.2" y="245.7" width="14" height="7.599999999999994" fill="#e1e1e1" stroke="#c4c4c4" stroke-width="1"/>
<rect x="949.2" y="254.29999999999998" width="14" height="7.599999999999994" fill="#e1e1e1" stroke="#c4c4c4" stroke-width="1"/>
<path d="M953.2 250.79999999999998 L956.2 247.29999999999998 L959.2 250.79999999999998 Z M953.2 257.29999999999995 L956.2 260.79999999999995 L959.2 257.29999999999995 Z" fill="#000"/>
<text x="946.5" y="257.4" font-size="11" font-family="'DejaVu Sans Condensed','Liberation Sans',sans-serif" fill="#000" text-anchor="end">2</text>
<path d="M849.5 286.5 L849.5 314.5" fill="none" stroke="#444" stroke-width="1.4"/>
<rect x="836.7" y="314.7" width="88.19999999999993" height="18.30000000000001" fill="#e1e1e1" stroke="#adadad" stroke-width="1"/>
<text x="839.7" y="327.55" font-size="11" font-family="'DejaVu Sans Condensed','Liberation Sans',sans-serif" fill="#000" textLength="28.4" lengthAdjust="spacingAndGlyphs">FDPLL</text>
<path d="M911.4 321.85 L915.4 325.85 L919.4 321.85" fill="none" stroke="#3a3a3a" stroke-width="1"/>
<clipPath id="g5"><rect x="827.8" y="305.6" width="102.20000000000005" height="28.799999999999955" rx="5"/></clipPath>
<g clip-path="url(#g5)"><rect x="827.8" y="305.6" width="102.20000000000005" height="28.799999999999955" rx="5" fill="none" stroke="#000" stroke-opacity="0.16" stroke-width="13" filter="url(#gb)" transform="translate(0.6 0.6)"/></g>
<rect x="827.8" y="305.6" width="102.20000000000005" height="28.799999999999955" rx="5" fill="none" stroke="#92d050" stroke-width="4" filter="url(#gs)"/>
<text x="986.7" y="215.1" font-size="11" font-family="'DejaVu Sans','Liberation Sans',sans-serif" fill="#000" textLength="81.5" lengthAdjust="spacingAndGlyphs">32,000,000 Hz</text>
<rect x="1153.5" y="91.5" width="218.0" height="142.0" fill="#f2f2f2" stroke="none" filter="url(#bs)"/><rect x="1153.5" y="91.5" width="218.0" height="142.0" fill="none" stroke="#2a2a2a" stroke-width="1.15" stroke-dasharray="1.7 1.35"/>
<text x="1251" y="106.4" font-size="9.2" font-family="'Liberation Sans',sans-serif" fill="#1f2a55" text-anchor="middle" textLength="47" lengthAdjust="spacingAndGlyphs">Main Clock</text>
<path d="M965.5 198.5 L1044.5 198.5 L1044.5 138.5 L1172.5 138.5" fill="none" stroke="#111" stroke-width="1.1"/>
<path d="M1180.4 138.5 L1171.4 134.1 L1171.4 142.9 Z" fill="#000"/>
<text x="1106.2" y="134.7" font-size="9" font-family="'Liberation Sans',sans-serif" fill="#111" textLength="28" lengthAdjust="spacingAndGlyphs">GCLK0</text>
<text x="1104.4" y="164.9" font-size="9" font-family="'Liberation Sans',sans-serif" fill="#111" textLength="37" lengthAdjust="spacingAndGlyphs">DFLLULP</text>
<path d="M1101.5 170.5 L1176.5 170.5" fill="none" stroke="#111" stroke-width="1.1"/>
<path d="M1183.3 170.5 L1174.3 166.1 L1174.3 174.9 Z" fill="#000"/>
<path d="M1183.3 115 L1207.4 127.6 L1207.4 179.4 L1183.3 192.1 Z" fill="#f2f2f2" stroke="#222" stroke-width="1"/>
<path d="M1207.5 151.5 L1248.5 151.5" fill="none" stroke="#111" stroke-width="1.1"/>
<path d="M1256.6 151.5 L1247.6 147.1 L1247.6 155.9 Z" fill="#000"/>
<rect x="1256.6" y="131" width="64.10000000000014" height="42.400000000000006" rx="7" fill="#5b9bd5" stroke="#1d3552" stroke-width="1.5"/>
<text x="1271.5" y="157" font-size="13" font-family="'Liberation Sans',sans-serif" fill="#fff">÷</text>
<text x="1286.3" y="157" font-size="13" font-family="'Liberation Sans',sans-serif" fill="#fff">1</text>
<path d="M1320.5 151.5 L1380.5 151.5" fill="none" stroke="#111" stroke-width="1.1"/>
<path d="M1387.3 151.5 L1378.3 147.1 L1378.3 155.9 Z" fill="#000"/>
<path d="M1195.5 186.5 L1195.5 204.5" fill="none" stroke="#444" stroke-width="1.4"/>
<rect x="1166.6" y="204.9" width="68.70000000000005" height="18.19999999999999" fill="#e1e1e1" stroke="#adadad" stroke-width="1"/>
<text x="1169.6" y="217.7" font-size="11" font-family="'DejaVu Sans Condensed','Liberation Sans',sans-serif" fill="#000" textLength="30.5" lengthAdjust="spacingAndGlyphs">GCLK0</text>
<path d="M1221.8 212.0 L1225.8 216.0 L1229.8 212.0" fill="none" stroke="#3a3a3a" stroke-width="1"/>
<path d="M1288.5 173.5 L1288.5 184.5" fill="none" stroke="#444" stroke-width="1.4"/>
<rect x="1246.6" y="184.6" width="88.60000000000014" height="18.400000000000006" fill="#e1e1e1" stroke="#adadad" stroke-width="1"/>
<text x="1249.6" y="197.5" font-size="11" font-family="'DejaVu Sans Condensed','Liberation Sans',sans-serif" fill="#000">DIV1</text>
<path d="M1321.7 191.8 L1325.7 195.8 L1329.7 191.8" fill="none" stroke="#3a3a3a" stroke-width="1"/>
<rect x="1388" y="134.7" width="90.5" height="26.80000000000001" fill="#c5e0b4" filter="url(#ls)"/>
<text x="1433.3" y="153.7" font-size="13.5" font-family="'Liberation Sans',sans-serif" fill="#1a1a1a" text-anchor="middle" textLength="26" lengthAdjust="spacingAndGlyphs">CPU</text>
<rect x="1383" y="163" width="95" height="22" fill="#fff"/>
<text x="1394" y="179" font-size="11" font-family="'DejaVu Sans','Liberation Sans',sans-serif" fill="#000" textLength="81.7" lengthAdjust="spacingAndGlyphs">32,000,000 Hz</text>
<clipPath id="g6"><rect x="1381.7" y="162.4" width="96.89999999999986" height="22.799999999999983" rx="5"/></clipPath>
<g clip-path="url(#g6)"><rect x="1381.7" y="162.4" width="96.89999999999986" height="22.799999999999983" rx="5" fill="none" stroke="#000" stroke-opacity="0.16" stroke-width="13" filter="url(#gb)" transform="translate(0.6 0.6)"/></g>
<rect x="1381.7" y="162.4" width="96.89999999999986" height="22.799999999999983" rx="5" fill="none" stroke="#92d050" stroke-width="4" filter="url(#gs)"/>
<rect x="1130.5" y="260.5" width="162.0" height="163.0" fill="#f2f2f2" stroke="none" filter="url(#bs)"/><rect x="1130.5" y="260.5" width="162.0" height="163.0" fill="none" stroke="#2a2a2a" stroke-width="1.15" stroke-dasharray="1.7 1.35"/>
<text x="1218.4" y="273.5" font-size="9.2" font-family="'Liberation Sans',sans-serif" fill="#1f2a55" text-anchor="middle" textLength="111.6" lengthAdjust="spacingAndGlyphs">Peripheral Clock Selection</text>
<text x="1077.2" y="280.1" font-size="9" font-family="'Liberation Sans',sans-serif" fill="#111" textLength="27.2" lengthAdjust="spacingAndGlyphs">GCLK0</text>
<path d="M1074.5 283.5 L1146.5 283.5" fill="none" stroke="#333" stroke-width="1.3"/>
<text x="1077.2" y="303" font-size="9" font-family="'Liberation Sans',sans-serif" fill="#111" textLength="27.2" lengthAdjust="spacingAndGlyphs">GCLK1</text>
<path d="M1074.5 307.5 L1146.5 307.5" fill="none" stroke="#333" stroke-width="1.3"/>
<text x="1077.2" y="328" font-size="9" font-family="'Liberation Sans',sans-serif" fill="#111" textLength="27.2" lengthAdjust="spacingAndGlyphs">GCLK2</text>
<path d="M1074.5 332.5 L1146.5 332.5" fill="none" stroke="#333" stroke-width="1.3"/>
<text x="1077.2" y="350.9" font-size="9" font-family="'Liberation Sans',sans-serif" fill="#111" textLength="27.2" lengthAdjust="spacingAndGlyphs">GCLK3</text>
<path d="M1074.5 355.5 L1146.5 355.5" fill="none" stroke="#333" stroke-width="1.3"/>
<text x="1077.2" y="377" font-size="9" font-family="'Liberation Sans',sans-serif" fill="#111" textLength="27.2" lengthAdjust="spacingAndGlyphs">GCLK4</text>
<path d="M1074.5 379.5 L1146.5 379.5" fill="none" stroke="#333" stroke-width="1.3"/>
<path d="M1147 273.5 L1171.2 294.4 L1171.2 379 L1147 399.1 Z" fill="#f2f2f2" stroke="#222" stroke-width="1"/>
<path d="M1235 326.500 L1249.200 336 L1235 345.200 Z" fill="#fff" stroke="#222" stroke-width="1.1"/>
<path d="M1241.5 341.5 L1241.5 365.5" fill="none" stroke="#333" stroke-width="1.4"/>
<rect x="1177.500" y="365.500" width="107" height="47" fill="#e1e1e1" stroke="#adadad" stroke-width="1"/>
<text x="1230.3" y="386.2" font-size="12" font-family="'DejaVu Sans Condensed','Liberation Sans',sans-serif" fill="#000" text-anchor="middle" textLength="77" lengthAdjust="spacingAndGlyphs">Peripheral Clock</text>
<text x="1230.3" y="400" font-size="12" font-family="'DejaVu Sans Condensed','Liberation Sans',sans-serif" fill="#000" text-anchor="middle" textLength="65" lengthAdjust="spacingAndGlyphs">Configuration</text>
<rect x="1390.3" y="323.1" width="86.29999999999995" height="27.19999999999999" fill="#c5e0b4" filter="url(#ls)"/>
<text x="1433.8" y="341.2" font-size="15.5" font-family="'Liberation Sans',sans-serif" fill="#1a1a1a" text-anchor="middle" textLength="72.3" lengthAdjust="spacingAndGlyphs">Peripherals</text>
<path d="M1249.5 336.5 L1382.5 336.5" fill="none" stroke="#111" stroke-width="1.1"/>
<path d="M1390.3 336.5 L1381.3 332.1 L1381.3 340.9 Z" fill="#000"/>
<clipPath id="c2"><rect x="744.7" y="85.5" width="734.8999999999999" height="252.8" rx="6"/></clipPath>
<g clip-path="url(#c2)"><rect x="744.7" y="85.5" width="734.8999999999999" height="252.8" rx="6" fill="none" stroke="#000" stroke-opacity="0.13" stroke-width="12" filter="url(#rb)" transform="translate(1.5 1.5)"/></g>
<rect x="744.7" y="85.5" width="734.8999999999999" height="252.8" rx="6" fill="none" stroke="#ff0000" stroke-width="2"/>
<rect x="828.5" y="391.5" width="157.0" height="221.0" fill="#f2f2f2" stroke="none" filter="url(#bs)"/><rect x="828.5" y="391.5" width="157.0" height="221.0" fill="none" stroke="#2a2a2a" stroke-width="1.15" stroke-dasharray="1.7 1.35"/>
<text x="904.7" y="406.1" font-size="9.2" font-family="'Liberation Sans',sans-serif" fill="#1f2a55" text-anchor="middle" textLength="76.4" lengthAdjust="spacingAndGlyphs">GCLK Generator 1</text>
<rect x="960.6" y="398.6" width="12" height="12" fill="#fff" stroke="#222" stroke-width="1"/>
<path d="M962.6 404.6 L965.1 407.6 L970.6 401.1" fill="none" stroke="#222" stroke-width="1.2"/>
<path d="M971.10 434.58 L973.45 434.38 L973.45 437.42 L971.10 437.22 L970.48 438.72 L972.29 440.23 L970.13 442.39 L968.62 440.58 L967.12 441.20 L967.32 443.55 L964.28 443.55 L964.48 441.20 L962.98 440.58 L961.47 442.39 L959.31 440.23 L961.12 438.72 L960.50 437.22 L958.15 437.42 L958.15 434.38 L960.50 434.58 L961.12 433.08 L959.31 431.57 L961.47 429.41 L962.98 431.22 L964.48 430.60 L964.28 428.25 L967.32 428.25 L967.12 430.60 L968.62 431.22 L970.13 429.41 L972.29 431.57 L970.48 433.08 Z" fill="#e9f3f9" stroke="#6a8496" stroke-width="1.25" stroke-linejoin="round"/>
<circle cx="965.8" cy="435.9" r="2.81" fill="#f2f2f2" stroke="#6a8496" stroke-width="1.25"/>
<text x="825.3" y="407.7" font-size="11" font-family="'DejaVu Sans Condensed','Liberation Sans',sans-serif" fill="#000" text-anchor="end" textLength="26.8" lengthAdjust="spacingAndGlyphs">XOSC</text>
<path d="M765.5 415.5 L838.5 415.5" fill="none" stroke="#333" stroke-width="1.3"/>
<text x="825.3" y="432.9" font-size="11" font-family="'DejaVu Sans Condensed','Liberation Sans',sans-serif" fill="#000" text-anchor="end" font-weight="bold" textLength="45.3" lengthAdjust="spacingAndGlyphs">OSC16M</text>
<path d="M765.5 438.5 L838.5 438.5" fill="none" stroke="#333" stroke-width="1.3"/>
<text x="825.3" y="458.1" font-size="11" font-family="'DejaVu Sans Condensed','Liberation Sans',sans-serif" fill="#000" text-anchor="end" textLength="22.6" lengthAdjust="spacingAndGlyphs">DFLL</text>
<path d="M765.5 463.5 L838.5 463.5" fill="none" stroke="#333" stroke-width="1.3"/>
<text x="825.3" y="481" font-size="11" font-family="'DejaVu Sans Condensed','Liberation Sans',sans-serif" fill="#000" text-anchor="end" textLength="29" lengthAdjust="spacingAndGlyphs">FDPLL</text>
<path d="M765.5 486.5 L838.5 486.5" fill="none" stroke="#333" stroke-width="1.3"/>
<text x="825.3" y="503.1" font-size="11" font-family="'DejaVu Sans Condensed','Liberation Sans',sans-serif" fill="#000" text-anchor="end" textLength="56.9" lengthAdjust="spacingAndGlyphs">OSCULP32K</text>
<path d="M765.5 510.5 L838.5 510.5" fill="none" stroke="#333" stroke-width="1.3"/>
<text x="825.3" y="527.7" font-size="11" font-family="'DejaVu Sans Condensed','Liberation Sans',sans-serif" fill="#000" text-anchor="end" textLength="45" lengthAdjust="spacingAndGlyphs">XOSC32K</text>
<path d="M765.5 535.5 L838.5 535.5" fill="none" stroke="#333" stroke-width="1.3"/>
<text x="825.3" y="552.9" font-size="11" font-family="'DejaVu Sans Condensed','Liberation Sans',sans-serif" fill="#000" text-anchor="end" textLength="55" lengthAdjust="spacingAndGlyphs">GCLK_IN[1]</text>
<path d="M765.5 558.5 L838.5 558.5" fill="none" stroke="#333" stroke-width="1.3"/>
<path d="M838.8 405 L862.4 434.7 L862.4 551.3 L838.8 579.9 Z" fill="#f2f2f2" stroke="#222" stroke-width="1"/>
<path d="M862.5 500.5 L878.5 500.5" fill="none" stroke="#111" stroke-width="1.1"/>
<path d="M886.4 500.5 L877.4 496.1 L877.4 504.9 Z" fill="#000"/>
<rect x="886.4" y="479.8" width="82.39999999999998" height="42.900000000000034" rx="7" fill="#5b9bd5" stroke="#1d3552" stroke-width="1.5"/>
<text x="894.8" y="505" font-size="13" font-family="'Liberation Sans',sans-serif" fill="#fff">÷</text>
<text x="910.8" y="505" font-size="13" font-family="'Liberation Sans',sans-serif" fill="#fff">4</text>
<path d="M929.5 522.5 L929.5 544.5" fill="none" stroke="#444" stroke-width="1.4"/>
<rect x="896.8" y="544.7" width="78.30000000000007" height="18.5" fill="#fff" stroke="#ababab" stroke-width="1"/>
<rect x="959.1" y="545.7" width="14" height="7.75" fill="#e1e1e1" stroke="#c4c4c4" stroke-width="1"/>
<rect x="959.1" y="554.45" width="14" height="7.75" fill="#e1e1e1" stroke="#c4c4c4" stroke-width="1"/>
<path d="M963.1 550.95 L966.1 547.45 L969.1 550.95 Z M963.1 557.45 L966.1 560.95 L969.1 557.45 Z" fill="#000"/>
<text x="956.4" y="557.5500000000001" font-size="11" font-family="'DejaVu Sans Condensed','Liberation Sans',sans-serif" fill="#000" text-anchor="end">4</text>
<path d="M851.5 565.5 L851.5 584.5" fill="none" stroke="#444" stroke-width="1.4"/>
<rect x="836.6" y="585.4" width="88.69999999999993" height="17.800000000000068" fill="#e1e1e1" stroke="#adadad" stroke-width="1"/>
<text x="839.6" y="598.0" font-size="11" font-family="'DejaVu Sans Condensed','Liberation Sans',sans-serif" fill="#000" textLength="40" lengthAdjust="spacingAndGlyphs">OSC16M</text>
<path d="M911.8 592.3 L915.8 596.3 L919.8 592.3" fill="none" stroke="#3a3a3a" stroke-width="1"/>
<clipPath id="g7"><rect x="827.8" y="582.4" width="102.40000000000009" height="23.899999999999977" rx="5"/></clipPath>
<g clip-path="url(#g7)"><rect x="827.8" y="582.4" width="102.40000000000009" height="23.899999999999977" rx="5" fill="none" stroke="#000" stroke-opacity="0.16" stroke-width="13" filter="url(#gb)" transform="translate(0.6 0.6)"/></g>
<rect x="827.8" y="582.4" width="102.40000000000009" height="23.899999999999977" rx="5" fill="none" stroke="#92d050" stroke-width="4" filter="url(#gs)"/>
<path d="M968.5 500.5 L1044.5 500.5" fill="none" stroke="#111" stroke-width="1.1"/>
<path d="M1051.6 500.5 L1042.6 496.1 L1042.6 504.9 Z" fill="#000"/>
<text x="1000.8" y="490.6" font-size="9" font-family="'Liberation Sans',sans-serif" fill="#111" textLength="28.6" lengthAdjust="spacingAndGlyphs">GCLK1</text>
<text x="991.7" y="513.6" font-size="11" font-family="'DejaVu Sans','Liberation Sans',sans-serif" fill="#000" textLength="74" lengthAdjust="spacingAndGlyphs">1,000,000 Hz</text>
<clipPath id="g8"><rect x="985.7" y="476.1" width="82.89999999999986" height="41.19999999999993" rx="5"/></clipPath>
<g clip-path="url(#g8)"><rect x="985.7" y="476.1" width="82.89999999999986" height="41.19999999999993" rx="5" fill="none" stroke="#000" stroke-opacity="0.16" stroke-width="13" filter="url(#gb)" transform="translate(0.6 0.6)"/></g>
<rect x="985.7" y="476.1" width="82.89999999999986" height="41.19999999999993" rx="5" fill="none" stroke="#92d050" stroke-width="4" filter="url(#gs)"/>
<clipPath id="c4"><rect x="744.6" y="377.5" width="324.4" height="252.5" rx="6"/></clipPath>
<g clip-path="url(#c4)"><rect x="744.6" y="377.5" width="324.4" height="252.5" rx="6" fill="none" stroke="#000" stroke-opacity="0.13" stroke-width="12" filter="url(#rb)" transform="translate(1.5 1.5)"/></g>
<rect x="744.6" y="377.5" width="324.4" height="252.5" rx="6" fill="none" stroke="#ff0000" stroke-width="2"/>
<rect x="1134.5" y="605.5" width="163.0" height="155.0" fill="#f2f2f2" stroke="none" filter="url(#bs)"/><rect x="1134.5" y="605.5" width="163.0" height="155.0" fill="none" stroke="#2a2a2a" stroke-width="1.15" stroke-dasharray="1.7 1.35"/>
<text x="1130.5" y="618.1" font-size="11" font-family="'DejaVu Sans Condensed','Liberation Sans',sans-serif" fill="#000" text-anchor="end" font-weight="bold" textLength="56.9" lengthAdjust="spacingAndGlyphs">OSCULP1K</text>
<path d="M1072.5 626.5 L1252.5 626.5" fill="none" stroke="#333" stroke-width="1.3"/>
<text x="1130.5" y="647.2" font-size="11" font-family="'DejaVu Sans Condensed','Liberation Sans',sans-serif" fill="#000" text-anchor="end" textLength="56.9" lengthAdjust="spacingAndGlyphs">OSCULP32K</text>
<path d="M1072.5 652.5 L1252.5 652.5" fill="none" stroke="#333" stroke-width="1.3"/>
<text x="1130.5" y="667.6" font-size="11" font-family="'DejaVu Sans Condensed','Liberation Sans',sans-serif" fill="#000" text-anchor="end" textLength="39.1" lengthAdjust="spacingAndGlyphs">XOSC1K</text>
<path d="M1072.5 677.5 L1252.5 677.5" fill="none" stroke="#333" stroke-width="1.3"/>
<text x="1130.5" y="697.3" font-size="11" font-family="'DejaVu Sans Condensed','Liberation Sans',sans-serif" fill="#000" text-anchor="end" textLength="44.8" lengthAdjust="spacingAndGlyphs">XOSC32K</text>
<path d="M1072.5 702.5 L1252.5 702.5" fill="none" stroke="#333" stroke-width="1.3"/>
<path d="M1252.5 612.2 L1276.7 632 L1276.7 710.3 L1252.5 729.7 Z" fill="#f2f2f2" stroke="#222" stroke-width="1"/>
<path d="M1266.5 718.5 L1266.5 738.5" fill="none" stroke="#444" stroke-width="1.4"/>
<path d="M1173.5 652.5 L1173.5 554.5 L1384.5 554.5" fill="none" stroke="#111" stroke-width="1.1"/>
<path d="M1392 554.5 L1383 550.1 L1383 558.9 Z" fill="#000"/>
<path d="M1336.5 554.5 L1336.5 520.5 L1384.5 520.5" fill="none" stroke="#111" stroke-width="1.1"/>
<path d="M1392 520.5 L1383 516.1 L1383 524.9 Z" fill="#000"/>
<path d="M1209.5 626.5 L1209.5 588.5 L1384.5 588.5" fill="none" stroke="#111" stroke-width="1.1"/>
<path d="M1392 588.5 L1383 584.1 L1383 592.9 Z" fill="#000"/>
<path d="M1276.5 668.5 L1386.5 668.5" fill="none" stroke="#111" stroke-width="1.1"/>
<path d="M1394.1 668.5 L1385.1 664.1 L1385.1 672.9 Z" fill="#000"/>
<circle cx="1336.5" cy="554.5" r="3" fill="#000"/>
<circle cx="1209.5" cy="626.5" r="3" fill="#000"/>
<circle cx="1173.5" cy="652.5" r="3" fill="#000"/>
<rect x="1392.5" y="507.1" width="88.0" height="27.5" fill="#c5e0b4" filter="url(#ls)"/>
<text x="1436.2" y="525.9" font-size="13.5" font-family="'Liberation Sans',sans-serif" fill="#1a1a1a" text-anchor="middle" textLength="50" lengthAdjust="spacingAndGlyphs">OPAMP</text>
<rect x="1392.5" y="541.4" width="88.0" height="27.5" fill="#c5e0b4" filter="url(#ls)"/>
<text x="1436.2" y="560.5" font-size="13.5" font-family="'Liberation Sans',sans-serif" fill="#1a1a1a" text-anchor="middle" textLength="21" lengthAdjust="spacingAndGlyphs">EIC</text>
<rect x="1392.5" y="575" width="88.0" height="27.5" fill="#c5e0b4" filter="url(#ls)"/>
<text x="1436.2" y="593.8" font-size="13.5" font-family="'Liberation Sans',sans-serif" fill="#1a1a1a" text-anchor="middle" textLength="31" lengthAdjust="spacingAndGlyphs">WDT</text>
<rect x="1394.1" y="654" width="87.40000000000009" height="27.100000000000023" fill="#c5e0b4" filter="url(#ls)"/>
<text x="1436.2" y="672.1" font-size="13.5" font-family="'Liberation Sans',sans-serif" fill="#1a1a1a" text-anchor="middle" textLength="26" lengthAdjust="spacingAndGlyphs">RTC</text>
<text x="1385.4" y="568.6" font-size="11" font-family="'DejaVu Sans','Liberation Sans',sans-serif" fill="#000" text-anchor="end" textLength="56.3" lengthAdjust="spacingAndGlyphs">32,768 Hz</text>
<text x="1385.4" y="608.4" font-size="11" font-family="'DejaVu Sans','Liberation Sans',sans-serif" fill="#000" text-anchor="end" textLength="48.8" lengthAdjust="spacingAndGlyphs">1,024 Hz</text>
<text x="1385.4" y="688.3" font-size="11" font-family="'DejaVu Sans','Liberation Sans',sans-serif" fill="#000" text-anchor="end" textLength="48.8" lengthAdjust="spacingAndGlyphs">1,024 Hz</text>
<rect x="832.5" y="728.5" width="158.0" height="32.0" fill="#f2f2f2" stroke="none" filter="url(#bs)"/><rect x="832.5" y="728.5" width="158.0" height="32.0" fill="none" stroke="#2a2a2a" stroke-width="1.15" stroke-dasharray="1.7 1.35"/>
<text x="912.5" y="743" font-size="9.2" font-family="'Liberation Sans',sans-serif" fill="#1f2a55" text-anchor="middle" textLength="110" lengthAdjust="spacingAndGlyphs">GCLK Generator x (x:2-4)</text>
<rect x="970" y="737.500" width="13" height="2" fill="#222"/>
<rect x="992.500" y="727.500" width="50" height="20" fill="#fff" stroke="#c8c8c8" stroke-width="1"/>
<text x="1001" y="743" font-size="11" font-family="'DejaVu Sans Condensed','Liberation Sans',sans-serif" fill="#000" textLength="33" lengthAdjust="spacingAndGlyphs">GCLK 2</text>
</svg>
</body></html>
